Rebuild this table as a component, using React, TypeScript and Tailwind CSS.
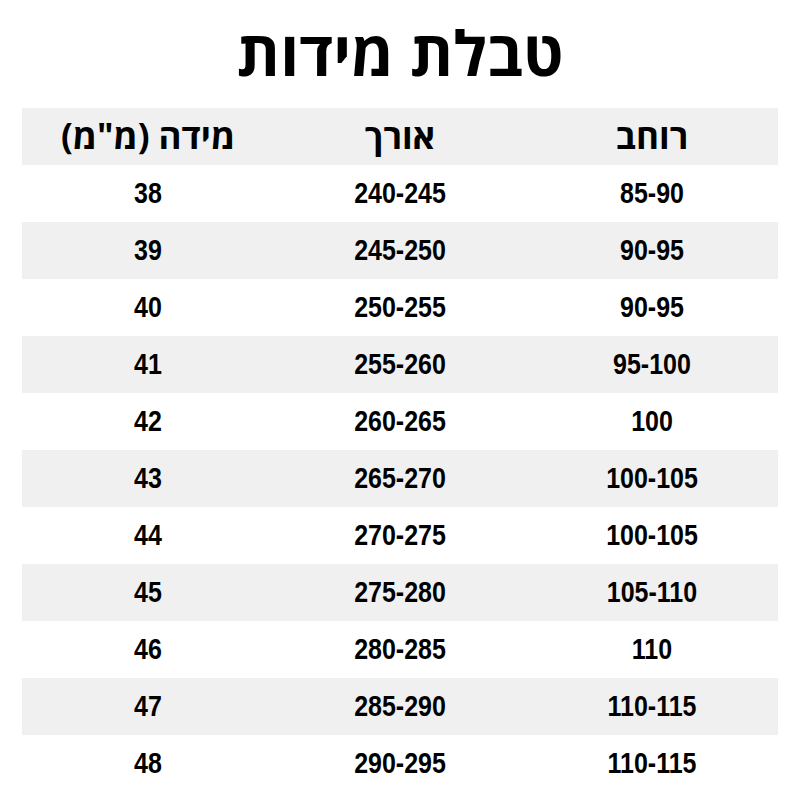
const rows = [
  ["85-90", "240-245", "38"],
  ["90-95", "245-250", "39"],
  ["90-95", "250-255", "40"],
  ["95-100", "255-260", "41"],
  ["100", "260-265", "42"],
  ["100-105", "265-270", "43"],
  ["100-105", "270-275", "44"],
  ["105-110", "275-280", "45"],
  ["110", "280-285", "46"],
  ["110-115", "285-290", "47"],
  ["110-115", "290-295", "48"],
];

const hebrew = { fontFamily: '"Open Sans", "Liberation Sans", sans-serif' };

export default function App() {
  return (
    <div
      dir="rtl"
      className="w-[800px] h-[800px] bg-white text-black overflow-hidden"
      style={{ fontFamily: '"Liberation Sans", Arial, sans-serif' }}
    >
      {/* Title */}
      <h1
        className="h-[108px] flex items-center justify-center text-[62px] font-bold leading-none pb-1"
        style={hebrew}
      >
        טבלת מידות
      </h1>

      {/* Table */}
      <div className="mx-[22px]">
        <div
          className="grid grid-cols-3 h-[57px] bg-[#f0f0f0] text-[35px] font-bold"
          style={hebrew}
        >
          <div className="flex items-center justify-center">רוחב</div>
          <div className="flex items-center justify-center">אורך</div>
          <div className="flex items-center justify-center">מידה (מ"מ)</div>
        </div>
        {rows.map((r, i) => (
          <div
            key={i}
            className={`grid grid-cols-3 h-[57px] text-[25px] font-bold ${
              i % 2 === 1 ? "bg-[#f0f0f0]" : "bg-white"
            }`}
          >
            {r.map((c, j) => (
              <div key={j} dir="ltr" className="flex items-center justify-center">
                <span className="inline-block scale-y-[1.18]">{c}</span>
              </div>
            ))}
          </div>
        ))}
      </div>
    </div>
  );
}
